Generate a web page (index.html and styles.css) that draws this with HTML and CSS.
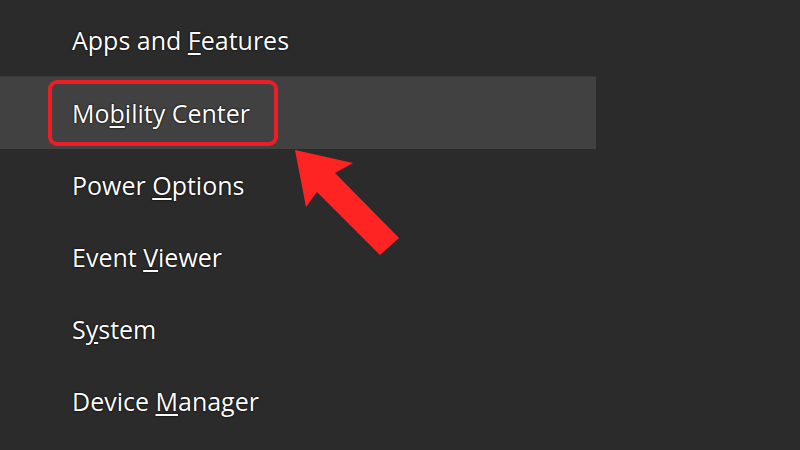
FILE: index.html
```html
<!DOCTYPE html>
<html lang="en">
<head>
  <meta charset="UTF-8" />
  <title>Quick Link Menu</title>
  <link rel="stylesheet" href="styles.css">
</head>
<body>
  <ul class="menu">
    <li class="item">Apps and <u>F</u>eatures</li>
    <li class="item active">Mo<u>b</u>ility Center</li>
    <li class="item">Power <u>O</u>ptions</li>
    <li class="item">Event <u>V</u>iewer</li>
    <li class="item">S<u>y</u>stem</li>
    <li class="item">Device <u>M</u>anager</li>
  </ul>

  <!-- pointer arrow drawn over the menu -->
  <svg class="arrow" width="800" height="450" viewBox="0 0 800 450">
    <polygon points="295,150 353,163 335,173 399,238 380,255 317,192 306,207" fill="#ff2424"/>
  </svg>
</body>
</html>
```

FILE: styles.css
```css
body {
  margin: 0;
  background: #2b2b2b;
  font-family: 'Open Sans', 'Noto Sans', sans-serif;
  color: #fff;
  position: relative;
  height: 450px;
  overflow: hidden;
}

.menu {
  list-style: none;
  margin: 0;
  padding: 4px 0 0;
  width: 596px;
}

.item {
  position: relative;
  height: 72px;
  line-height: 72px;
  padding-left: 72px;
  font-size: 25px;
  text-shadow: 0 0 2px #000, 0 0 1px #000;
}
.item u {
  text-underline-offset: 3px;
  text-decoration-thickness: 2px;
}

.item.active {
  background: #414141;
  border-top: 1px solid #383838;
}
.item.active::after {
  content: '';
  position: absolute;
  left: 48px;
  top: 3px;
  width: 222px;
  height: 58px;
  border: 4px solid #ee1c24;
  border-radius: 9px;
}

.arrow {
  position: absolute;
  left: 0;
  top: 0;
}
```
